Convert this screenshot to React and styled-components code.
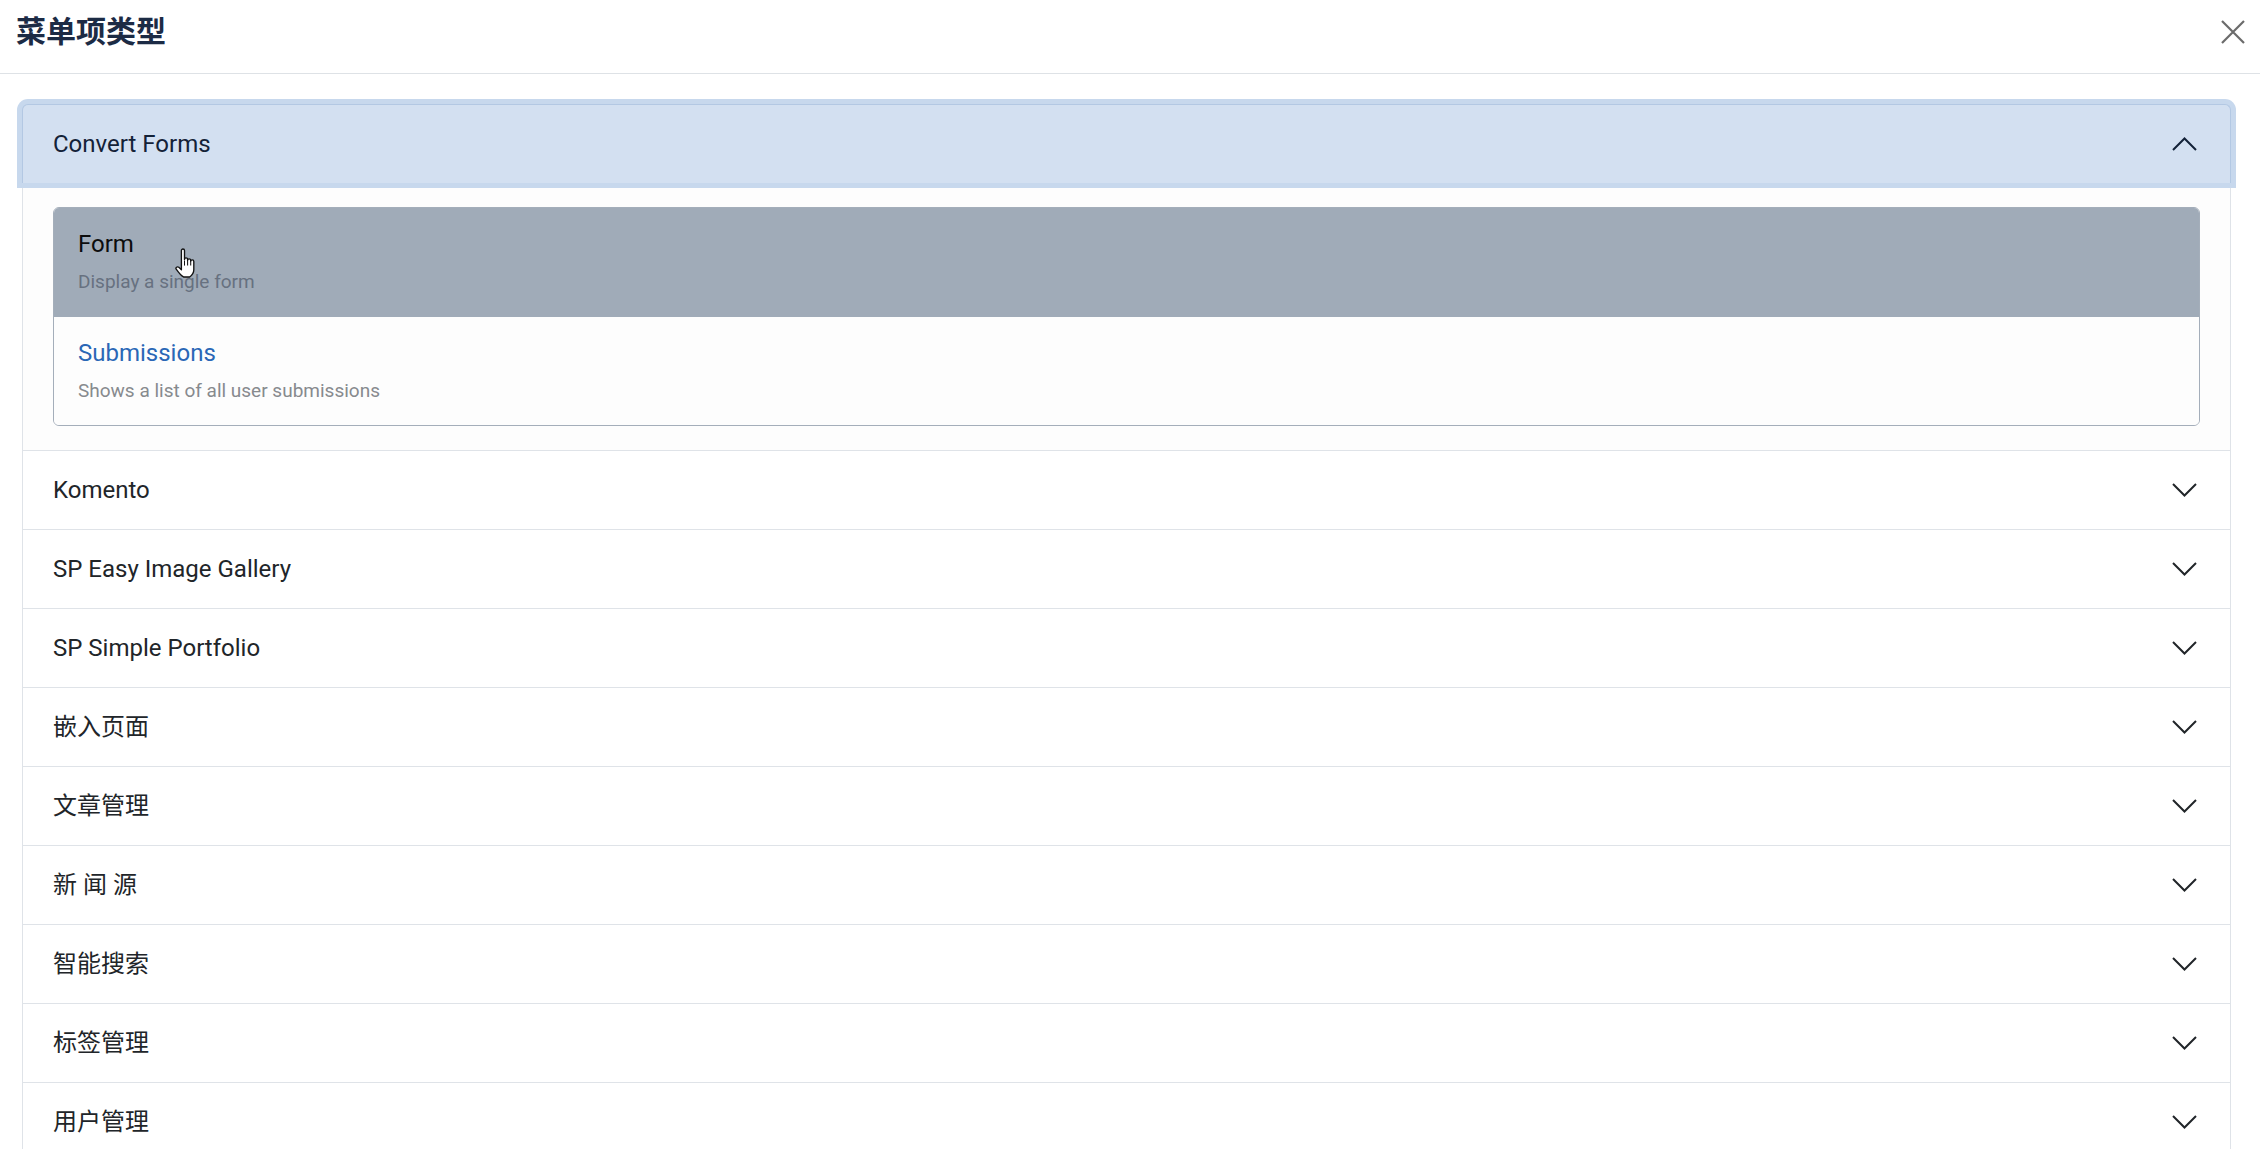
import styled, { createGlobalStyle } from "styled-components";

const GlobalStyle = createGlobalStyle`
  html, body {
    margin: 0;
    padding: 0;
    background: #ffffff;
  }
  body {
    font-family: Roboto, "Noto Sans CJK SC", sans-serif;
    color: #212529;
    overflow: hidden;
  }
`;

const Modal = styled.div`
  width: 2260px;
  height: 1149px;
  overflow: hidden;
  position: relative;
`;

const Header = styled.div`
  height: 73px;
  border-bottom: 1px solid #dee2e6;
  display: flex;
  align-items: center;
  justify-content: space-between;
  padding: 0 15px 0 16px;
`;

const Title = styled.h1`
  margin: 0 0 16px 0;
  font-size: 30px;
  font-weight: 700;
  color: #1c2b45;
  line-height: 1.2;
  font-family: "Noto Sans CJK SC", sans-serif;
`;

const CloseButton = styled.button`
  border: 0;
  background: none;
  padding: 0;
  margin-bottom: 10px;
  width: 24px;
  height: 24px;
  display: flex;
  align-items: center;
  justify-content: center;
`;

const Body = styled.div`
  padding: 30px 29px 0 22px;
`;

const Accordion = styled.div`
  border-left: 1px solid #dfe3e8;
  border-right: 1px solid #dfe3e8;
`;

const Item = styled.div`
  border-bottom: 1px solid #dfe3e8;
`;

const ItemHeader = styled.div`
  position: relative;
  height: 78px;
  display: flex;
  align-items: center;
  justify-content: space-between;
  padding: 0 33px 0 30px;
  font-size: 24px;
  line-height: 1.5;
  color: ${(p) => (p.$open ? "#132238" : "#212529")};
  background: ${(p) => (p.$open ? "#d3e0f1" : "#ffffff")};
  margin: ${(p) => (p.$open ? "0 -1px" : "0")};
  border: ${(p) => (p.$open ? "1px solid #b3c8e3" : "0")};
  border-bottom: 0;
  border-radius: ${(p) => (p.$open ? "6px 6px 0 0" : "0")};
  box-shadow: ${(p) => (p.$open ? "0 0 0 5px #c7d8ed" : "none")};
  z-index: ${(p) => (p.$open ? 1 : 0)};
`;

const ItemBody = styled.div`
  padding: 24px 30px 24px 30px;
  background: #fdfdfd;
`;

const ListGroup = styled.div`
  border: 1px solid #a4aeba;
  border-radius: 6px;
  overflow: hidden;
  background: #fdfdfd;
  position: relative;
`;

const ListItem = styled.div`
  padding: 18px 24px 20px 24px;
  background: ${(p) => (p.$active ? "#a0abb8" : "#fdfdfd")};
`;

const ListTitle = styled.div`
  font-size: 24px;
  line-height: 36px;
  color: ${(p) => (p.$active ? "#0d0d0d" : "#2a67b6")};
`;

const ListDesc = styled.div`
  margin-top: 6px;
  font-size: 19px;
  line-height: 28.5px;
  color: ${(p) => (p.$active ? "#677180" : "#878a8e")};
`;

const Cursor = styled.div`
  position: absolute;
  left: 118px;
  top: 40px;
  width: 25px;
  height: 30px;
  pointer-events: none;
`;

const Chevron = ({ up }) => (
  <svg width="25" height="14" viewBox="0 0 25 14">
    <polyline
      points={up ? "1,13 12.5,1.5 24,13" : "1,1 12.5,12.5 24,1"}
      fill="none"
      stroke={up ? "#132238" : "#212529"}
      strokeWidth="2"
    />
  </svg>
);

const HandCursor = () => (
  <svg width="25" height="30" viewBox="0 0 22 29">
    <path
      d="M8 2.5a1.5 1.5 0 0 1 3 0V11a1.5 1.5 0 0 1 3 0v1a1.5 1.5 0 0 1 3 0v1a1.5 1.5 0 0 1 3 0v8c0 3.5-2 5.5-4 7H10c-2-1-4-3.2-7-7.5-1-1.5 1-3 2.5-1.8L8 21Z"
      fill="#ffffff"
      stroke="#111"
      strokeWidth="1.3"
      strokeLinejoin="round"
    />
    <line x1="11" y1="12" x2="11" y2="17" stroke="#111" strokeWidth="1" />
    <line x1="14" y1="12.5" x2="14" y2="17" stroke="#111" strokeWidth="1" />
    <line x1="17" y1="13.5" x2="17" y2="17" stroke="#111" strokeWidth="1" />
  </svg>
);

const groups = [
  "Komento",
  "SP Easy Image Gallery",
  "SP Simple Portfolio",
  "嵌入页面",
  "文章管理",
  "新 闻 源",
  "智能搜索",
  "标签管理",
  "用户管理",
];

const forms = [
  { title: "Form", desc: "Display a single form", active: true },
  { title: "Submissions", desc: "Shows a list of all user submissions" },
];

export default function App() {
  return (
    <Modal>
      <GlobalStyle />
      <Header>
        <Title>菜单项类型</Title>
        <CloseButton aria-label="close">
          <svg width="24" height="24" viewBox="0 0 24 24">
            <path d="M1 1L23 23M23 1L1 23" stroke="#6b6b6b" strokeWidth="2.2" />
          </svg>
        </CloseButton>
      </Header>
      <Body>
        <Accordion>
          <Item>
            <ItemHeader $open>
              <span>Convert Forms</span>
              <Chevron up />
            </ItemHeader>
            <ItemBody>
              <ListGroup>
                {forms.map((f) => (
                  <ListItem key={f.title} $active={f.active}>
                    <ListTitle $active={f.active}>{f.title}</ListTitle>
                    <ListDesc $active={f.active}>{f.desc}</ListDesc>
                  </ListItem>
                ))}
                <Cursor>
                  <HandCursor />
                </Cursor>
              </ListGroup>
            </ItemBody>
          </Item>
          {groups.map((g) => (
            <Item key={g}>
              <ItemHeader>
                <span>{g}</span>
                <Chevron />
              </ItemHeader>
            </Item>
          ))}
        </Accordion>
      </Body>
    </Modal>
  );
}
